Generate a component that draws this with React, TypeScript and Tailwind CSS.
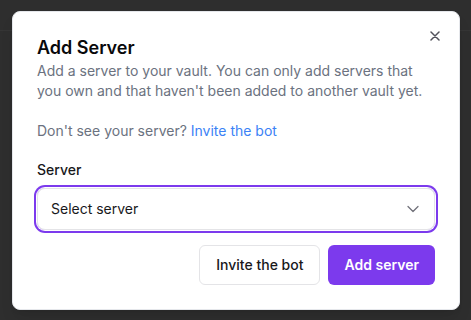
import { useState } from "react";

export default function App() {
  const [server] = useState("");

  return (
    <div className="relative w-[471px] h-[320px] overflow-hidden bg-[#2e2e2e] font-['Inter','Liberation_Sans',sans-serif]">
      {/* page behind the overlay */}
      <div className="h-[31px] border-b border-[#353535]" />

      {/* dialog */}
      <div className="absolute left-[12px] top-[11px] w-[448px] rounded-lg border border-gray-200 bg-white px-6 pt-6 pb-6 shadow-lg">
        <button className="absolute right-[19px] top-[19px] text-[#52525b]" aria-label="Close">
          <svg width="10" height="10" viewBox="0 0 10 10" fill="none" stroke="currentColor" strokeWidth="1.5" strokeLinecap="round">
            <path d="M1 1l8 8M9 1L1 9" />
          </svg>
        </button>

        <h2 className="text-lg leading-6 font-semibold text-[#09090b]">Add Server</h2>
        <p className="mt-px text-sm leading-5 text-[#6b7280]">
          Add a server to your vault. You can only add servers that you own and that haven't been added to another vault yet.
        </p>
        <p className="mt-5 text-sm leading-5 text-[#6b7280]">
          Don't see your server? <a className="text-[#3b82f6]">Invite the bot</a>
        </p>

        <label className="mt-[19px] block text-sm leading-5 font-medium text-[#18181b]">Server</label>
        <div className="mt-2 flex h-[42px] items-center justify-between rounded-lg border border-[#e4e4e7] pl-[13px] pr-[11px] ring-2 ring-[#7c3aed] ring-offset-1">
          <span className="text-sm text-[#18181b]">{server || "Select server"}</span>
          <svg width="20" height="20" viewBox="0 0 24 24" fill="none" stroke="#71717a" strokeWidth="1.5" strokeLinecap="round" strokeLinejoin="round">
            <path d="m6 9 6 6 6-6" />
          </svg>
        </div>

        <div className="mt-[15px] flex justify-end gap-2">
          <button className="h-10 rounded-md border border-[#e4e4e7] bg-white px-4 text-sm font-medium text-[#18181b]">
            Invite the bot
          </button>
          <button className="h-10 rounded-md bg-[#7c3aed] px-4 text-sm font-semibold text-white">
            Add server
          </button>
        </div>
      </div>
    </div>
  );
}
